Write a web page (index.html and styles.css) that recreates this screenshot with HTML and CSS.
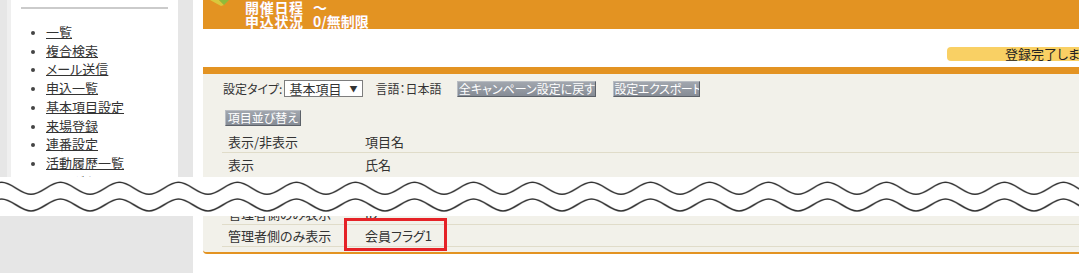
FILE: index.html
```html
<html lang="ja">
  <head>
    <meta charset="UTF-8" />
    <meta name="viewport" content="width=device-width, initial-scale=1.0" />
    <title>基本項目設定</title>

    <link rel="stylesheet" href="styles.css">
  </head>
  <body>
    <div class="top">
      <div class="edge"></div>
      <nav class="side">
        <div class="side-rule"></div>
        <ul class="menu">
          <li><a href="#">一覧</a></li>
          <li><a href="#">複合検索</a></li>
          <li><a href="#">メール送信</a></li>
          <li><a href="#">申込一覧</a></li>
          <li><a href="#">基本項目設定</a></li>
          <li><a href="#">来場登録</a></li>
          <li><a href="#">連番設定</a></li>
          <li><a href="#">活動履歴一覧</a></li>
          <li><a href="#">履歴ダウンロード</a></li>
        </ul>
      </nav>
      <div class="gutter"></div>
      <main class="main">
        <header class="event">
          <svg class="leaf" width="22" height="6" viewBox="0 0 22 6">
            <polygon points="0,0 9,0 14,5 11,6" fill="#d9c83c" />
            <polygon points="9,0 19,0 14,5" fill="#8fbb3a" />
          </svg>
          <dl class="event-info">
            <div class="event-line"><dt>開催日程</dt><dd>～</dd></div>
            <div class="event-line"><dt>申込状況</dt><dd>0/無制限</dd></div>
          </dl>
        </header>

        <div class="notice-area">
          <div class="notice">登録完了しました</div>
        </div>

        <section class="panel">
          <div class="tools">
            <span class="tool-label">設定タイプ:</span>
            <span class="select">基本項目<span class="arrow">▼</span></span>
            <span class="lang">言語：日本語</span>
            <button class="btn btn-reset">全キャンペーン設定に戻す</button>
            <button class="btn btn-export">設定エクスポート</button>
          </div>
          <button class="btn btn-sort">項目並び替え</button>
          <div class="fields">
            <div class="field"><span>表示/非表示</span><span>項目名</span></div>
            <div class="field"><span>表示</span><span>氏名</span></div>
          </div>
        </section>
      </main>
    </div>

    <div class="break">
      <svg class="wave" width="1079" height="39">
        <defs>
          <pattern id="wave" x="1.5" y="0" width="59" height="39" patternUnits="userSpaceOnUse">
            <path d="M-2 5.3H0C10.7 5.3 18.8 17.3 29.5 17.3S48.3 5.3 59 5.3H61M-2 22H0C10.7 22 18.8 34 29.5 34S48.3 22 59 22H61"
                  fill="none" stroke="#333" stroke-width="1.6" />
          </pattern>
        </defs>
        <rect width="100%" height="100%" fill="url(#wave)" />
      </svg>
    </div>

    <div class="bottom">
      <div class="bottom-edge"></div>
      <div class="main">
        <section class="panel panel-end">
          <div class="fields fields-cut">
            <div class="field"><span>管理者側のみ表示</span><span>ID</span></div>
            <div class="field marked">
              <span>管理者側のみ表示</span><span>会員フラグ1</span>
              <span class="mark"></span>
            </div>
          </div>
        </section>
      </div>
    </div>
  </body>
</html>
```

FILE: styles.css
```css
*,
*::after,
*::before {
  margin: 0;
  padding: 0;
  box-sizing: border-box;
}

:root {
  --orange: #e39322;
  --grey: #e6e6e6;
  --panel-bg: #f2f1ea;
  --rule: #e0dcc9;
  --text: #333;
  --font: "Noto Sans CJK JP", "Noto Sans", sans-serif;
}

body {
  width: 1079px;
  background: #fff;
  color: var(--text);
  font-family: var(--font);
  font-feature-settings: "palt";
}

/* top part, cut off by the wave */
.top {
  display: flex;
  height: 177px;
  overflow: hidden;
}

.edge {
  width: 11px;
  background: linear-gradient(to right, var(--grey) 0 7px, #efefef 7px 11px);
}

.side {
  width: 167px;
  background: #fff;
  padding: 7px 10px 0;
}

.side-rule {
  height: 2px;
  background: #cbcbcb;
}

.menu {
  margin-top: 14px;
  padding-left: 25px;
  font-size: 13px;
  line-height: 18.7px;
}

.menu li {
  list-style: disc;
  white-space: nowrap;
}

.menu li::marker {
  color: #444;
  font-size: 10px;
}

.menu a {
  color: var(--text);
  text-decoration: underline;
}

.gutter {
  width: 15px;
  background: var(--grey);
}

.main {
  flex: 1;
  min-width: 0;
  background: #fff;
  padding-left: 10px;
  overflow: hidden;
}

/* event header */
.event {
  display: flex;
  height: 29px;
  background: var(--orange);
}

.leaf {
  margin-left: 7px;
  flex-shrink: 0;
}

.event-info {
  margin-left: 13px;
  color: #fff;
  font-size: 14px;
  font-weight: 700;
  line-height: 14px;
  text-shadow: -0.5px 0 0 rgba(214, 110, 160, 0.55);
}

.event-line {
  display: flex;
}

.event-line dt {
  width: 68px;
  letter-spacing: 0.7px;
}

.notice-area {
  height: 38px;
  padding: 18px 0 0 744px;
}

.notice {
  width: 200px;
  height: 14px;
  padding-left: 58px;
  background: #f9d064;
  border-radius: 4px 0 0 4px;
  font-size: 13px;
  line-height: 13px;
  color: #222;
  white-space: nowrap;
}

/* settings panel */
.panel {
  background: var(--panel-bg);
  border-top: 7px solid var(--orange);
  padding-left: 19px;
  min-height: 110px;
}

.tools {
  display: flex;
  align-items: center;
  height: 17px;
  margin-top: 6px;
  padding-left: 1px;
  font-size: 12px;
}

.select {
  display: flex;
  justify-content: space-between;
  align-items: center;
  width: 79px;
  height: 17px;
  margin-left: 2px;
  padding: 0 5px 0 4px;
  background: #fff;
  border: 1px solid #7d7d7d;
  font-size: 13px;
}

.arrow {
  font-size: 8px;
}

.lang {
  margin-left: 12px;
}

.btn {
  height: 16px;
  background: linear-gradient(#a1a6ae, #868c95);
  border: 1px solid;
  border-color: #b8bcc2 #5c6168 #5c6168 #b8bcc2;
  color: #fff;
  font-family: var(--font);
  font-feature-settings: "palt";
  font-size: 12px;
  line-height: 14px;
  text-align: center;
  white-space: nowrap;
  overflow: hidden;
}

.btn-reset {
  width: 139px;
  margin-left: 16px;
}

.btn-export {
  width: 87px;
  margin-left: 17px;
  letter-spacing: -0.3px;
}

.btn-sort {
  display: block;
  width: 76px;
  margin: 13px 0 0 3px;
}

.fields {
  margin-top: 5px;
  font-size: 13px;
}

.field {
  position: relative;
  display: grid;
  grid-template-columns: 137px 1fr;
  align-items: center;
  height: 22px;
  border-bottom: 1px solid var(--rule);
  white-space: nowrap;
}

.fields .field:last-child {
  border-bottom: none;
}

.field span {
  padding-left: 6px;
}

/* wave break */
.break {
  height: 39px;
  background: #fff;
}

.wave {
  display: block;
}

/* bottom part */
.bottom {
  display: flex;
  height: 57px;
  overflow: hidden;
}

.bottom-edge {
  width: 193px;
  background: var(--grey);
}

.panel-end {
  min-height: 0;
  border-top: none;
  padding-bottom: 5px;
  border-bottom: 2px solid var(--orange);
  border-bottom-left-radius: 4px;
}

.fields-cut {
  margin-top: -13px;
}

.fields-cut .field:last-child {
  border-bottom: 1px solid var(--rule);
}

.field .mark {
  position: absolute;
  left: 122px;
  top: -7px;
  width: 103px;
  height: 33px;
  padding: 0;
  border: 3px solid #e52227;
}
```
